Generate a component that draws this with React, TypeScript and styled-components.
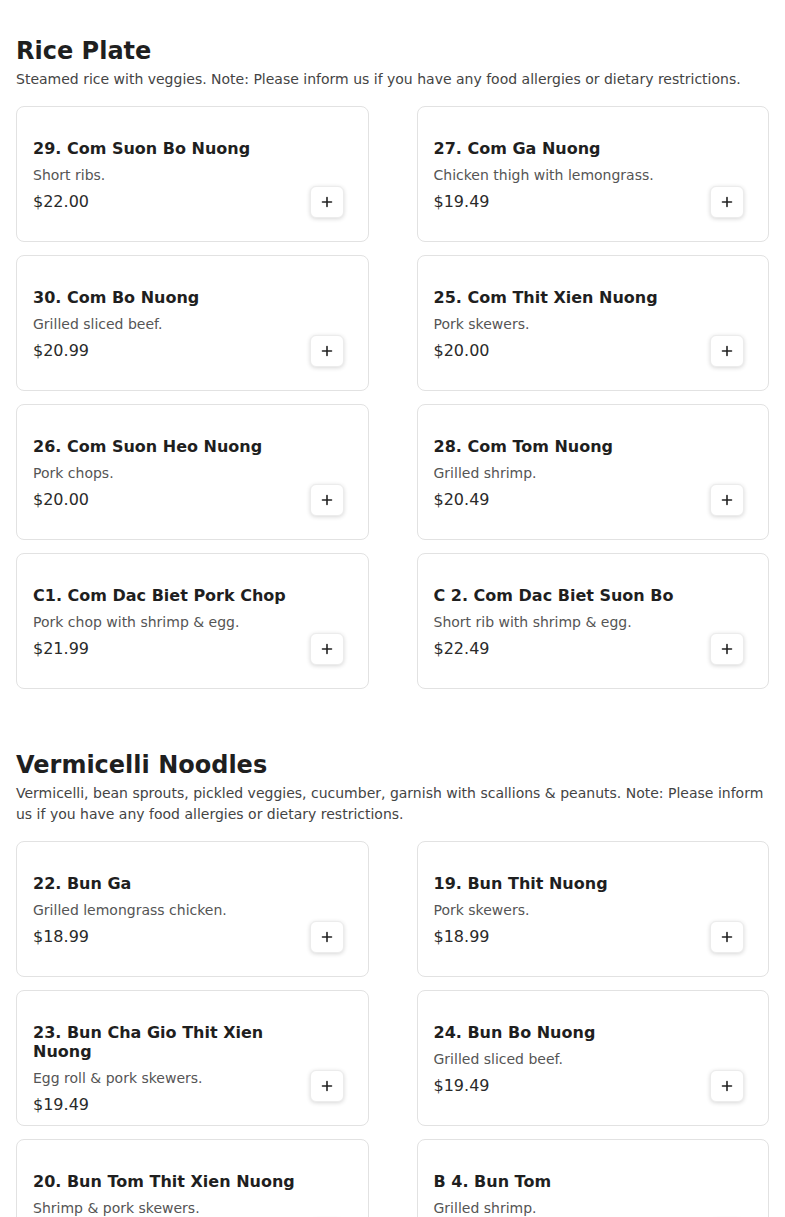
import React from "react";
import styled, { createGlobalStyle } from "styled-components";

const Global = createGlobalStyle`
  html, body { margin: 0; padding: 0; background: #fff; }
  body { font-family: "DejaVu Sans", "Liberation Sans", sans-serif; color: #222; }
  * { box-sizing: border-box; }
`;

const Page = styled.main`
  display: flex;
  flex-direction: column;
  padding: 0 16px;
`;

const Section = styled.section`
  display: flex;
  flex-direction: column;
  padding-top: 37px;
  padding-bottom: 25px;
`;

const SectionTitle = styled.h2`
  margin: 0 0 4px;
  font-size: 24px;
  line-height: 28px;
  font-weight: 700;
  color: #1f1f1f;
`;

const SectionDesc = styled.p`
  margin: 0 0 16px;
  font-size: 14px;
  line-height: 21px;
  color: #444;
`;

const Grid = styled.div`
  display: grid;
  grid-template-columns: 1fr 1fr;
  column-gap: 48px;
  row-gap: 13px;
`;

const Card = styled.div`
  height: 136px;
  display: flex;
  align-items: flex-start;
  gap: 10px;
  padding: 32px 24px 20px 16px;
  border: 1px solid #e2e2e2;
  border-radius: 8px;
  background: #fff;
`;

const Info = styled.div`
  flex: 1;
  min-width: 0;
  display: flex;
  flex-direction: column;
`;

const ItemName = styled.h3`
  margin: 0 0 7px;
  font-size: 16px;
  line-height: 19px;
  font-weight: 700;
  color: #1f1f1f;
`;

const ItemDesc = styled.p`
  margin: 0 0 6.5px;
  font-size: 14px;
  line-height: 20px;
  color: #555;
`;

const Price = styled.span`
  font-size: 16px;
  line-height: 20px;
  color: #2a2a2a;
`;

const AddButton = styled.button`
  flex: none;
  align-self: flex-end;
  margin-bottom: 3px;
  width: 34px;
  height: 32px;
  padding: 0;
  display: flex;
  align-items: center;
  justify-content: center;
  border: 1px solid #ececec;
  border-radius: 6px;
  background: #fff;
  box-shadow: 0 1px 4px rgba(0, 0, 0, 0.16);
  cursor: pointer;
  color: #222;
`;

type Item = { name: string; desc: string; price: string };

const sections: { title: string; desc: string; items: Item[] }[] = [
  {
    title: "Rice Plate",
    desc: "Steamed rice with veggies. Note: Please inform us if you have any food allergies or dietary restrictions.",
    items: [
      { name: "29. Com Suon Bo Nuong", desc: "Short ribs.", price: "$22.00" },
      { name: "27. Com Ga Nuong", desc: "Chicken thigh with lemongrass.", price: "$19.49" },
      { name: "30. Com Bo Nuong", desc: "Grilled sliced beef.", price: "$20.99" },
      { name: "25. Com Thit Xien Nuong", desc: "Pork skewers.", price: "$20.00" },
      { name: "26. Com Suon Heo Nuong", desc: "Pork chops.", price: "$20.00" },
      { name: "28. Com Tom Nuong", desc: "Grilled shrimp.", price: "$20.49" },
      { name: "C1. Com Dac Biet Pork Chop", desc: "Pork chop with shrimp & egg.", price: "$21.99" },
      { name: "C 2. Com Dac Biet Suon Bo", desc: "Short rib with shrimp & egg.", price: "$22.49" },
    ],
  },
  {
    title: "Vermicelli Noodles",
    desc: "Vermicelli, bean sprouts, pickled veggies, cucumber, garnish with scallions & peanuts. Note: Please inform us if you have any food allergies or dietary restrictions.",
    items: [
      { name: "22. Bun Ga", desc: "Grilled lemongrass chicken.", price: "$18.99" },
      { name: "19. Bun Thit Nuong", desc: "Pork skewers.", price: "$18.99" },
      { name: "23. Bun Cha Gio Thit Xien Nuong", desc: "Egg roll & pork skewers.", price: "$19.49" },
      { name: "24. Bun Bo Nuong", desc: "Grilled sliced beef.", price: "$19.49" },
      { name: "20. Bun Tom Thit Xien Nuong", desc: "Shrimp & pork skewers.", price: "$19.99" },
      { name: "B 4. Bun Tom", desc: "Grilled shrimp.", price: "$19.49" },
    ],
  },
];

const Plus = () => (
  <svg width="12" height="12" viewBox="0 0 12 12" aria-hidden="true">
    <path d="M6 1.5v9M1.5 6h9" stroke="currentColor" strokeWidth="1.6" strokeLinecap="round" />
  </svg>
);

export default function App() {
  return (
    <>
      <Global />
      <Page>
        {sections.map((s) => (
          <Section key={s.title}>
            <SectionTitle>{s.title}</SectionTitle>
            <SectionDesc>{s.desc}</SectionDesc>
            <Grid>
              {s.items.map((it) => (
                <Card key={it.name}>
                  <Info>
                    <ItemName>{it.name}</ItemName>
                    <ItemDesc>{it.desc}</ItemDesc>
                    <Price>{it.price}</Price>
                  </Info>
                  <AddButton aria-label={`Add ${it.name}`}>
                    <Plus />
                  </AddButton>
                </Card>
              ))}
            </Grid>
          </Section>
        ))}
      </Page>
    </>
  );
}
